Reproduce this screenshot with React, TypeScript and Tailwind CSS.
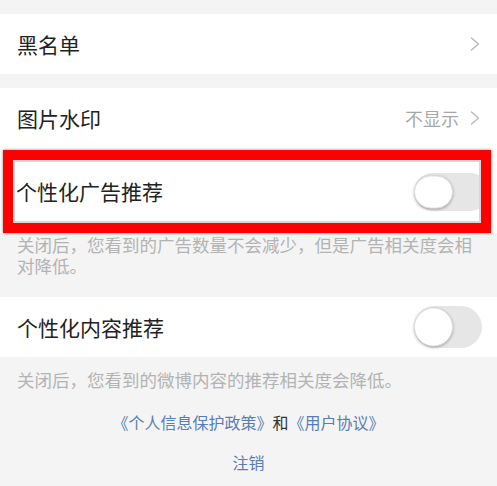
import React from "react";

const font = { fontFamily: '"Noto Sans CJK SC", "Noto Sans", sans-serif' };

function Chevron() {
  return (
    <svg width="10" height="14" viewBox="0 0 10 14" className="shrink-0">
      <path d="M1.5 1 L8.5 7 L1.5 13" fill="none" stroke="#b8b8b8" strokeWidth="1.4" strokeLinecap="round" strokeLinejoin="round" />
    </svg>
  );
}

function Toggle({ tall = 42, knobH = 39, width = 68 }: { tall?: number; knobH?: number; width?: number }) {
  return (
    <div
      className="relative shrink-0 rounded-full bg-[#e6e6e6]"
      style={{ height: tall, width }}
    >
      <div
        className="absolute left-0 top-1/2 -translate-y-1/2 w-[39px] rounded-full bg-white shadow-[0_1px_3px_rgba(0,0,0,0.3)] border border-[#e0e0e0]"
        style={{ height: knobH }}
      />
    </div>
  );
}

export default function App() {
  return (
    <div className="w-[497px] h-[486px] overflow-hidden bg-[#f4f4f4] pt-[14px]" style={font}>
      <div className="h-[60px] bg-white flex items-center justify-between pl-[17px] pr-[17px]">
        <span className="text-[21px] text-[#222] leading-none">黑名单</span>
        <Chevron />
      </div>
      <div className="h-[14px]" />
      <div className="h-[60px] bg-white flex items-center justify-between pl-[17px] pr-[17px]">
        <span className="text-[21px] text-[#222] leading-none">图片水印</span>
        <div className="flex items-center gap-[11px]">
          <span className="text-[18px] text-[#a8a8a8] leading-none">不显示</span>
          <Chevron />
        </div>
      </div>
      <div className="h-[85px] bg-white pt-[2px] pl-[3px]">
        <div className="w-[488px] h-[83px] border-[10px] border-[#ff0000] shadow-[0_0_3px_rgba(0,0,0,0.45)] bg-[#ff0000]">
          <div className="h-full border-2 border-[#d8d8d8] bg-white flex items-center justify-between pl-[1px] overflow-hidden">
            <span className="text-[21px] text-[#222] leading-none">个性化广告推荐</span>
            <div className="mr-[-10px]">
              <Toggle tall={38} knobH={33} width={75} />
            </div>
          </div>
        </div>
      </div>
      <div className="px-[17px] pt-[1px] text-[17.5px] leading-[21px] text-[#b3b3b3]">
        关闭后，您看到的广告数量不会减少，但是广告相关度会相对降低。
      </div>
      <div className="h-[21px]" />
      <div className="h-[60px] bg-white flex items-center justify-between pl-[17px] pr-[15px]">
        <span className="text-[21px] text-[#222] leading-none">个性化内容推荐</span>
        <Toggle />
      </div>
      <div className="px-[17px] pt-[12px] text-[17.5px] leading-[21px] text-[#b3b3b3]">
        关闭后，您看到的微博内容的推荐相关度会降低。
      </div>
      <div className="mt-[21px] text-center text-[16px] leading-[22px]">
        <span className="text-[#5a7db5]">《个人信息保护政策》</span>
        <span className="text-[#333]">和</span>
        <span className="text-[#5a7db5]">《用户协议》</span>
      </div>
      <div className="mt-[18px] text-center text-[16px] leading-[22px] text-[#5a7db5]">注销</div>
    </div>
  );
}
